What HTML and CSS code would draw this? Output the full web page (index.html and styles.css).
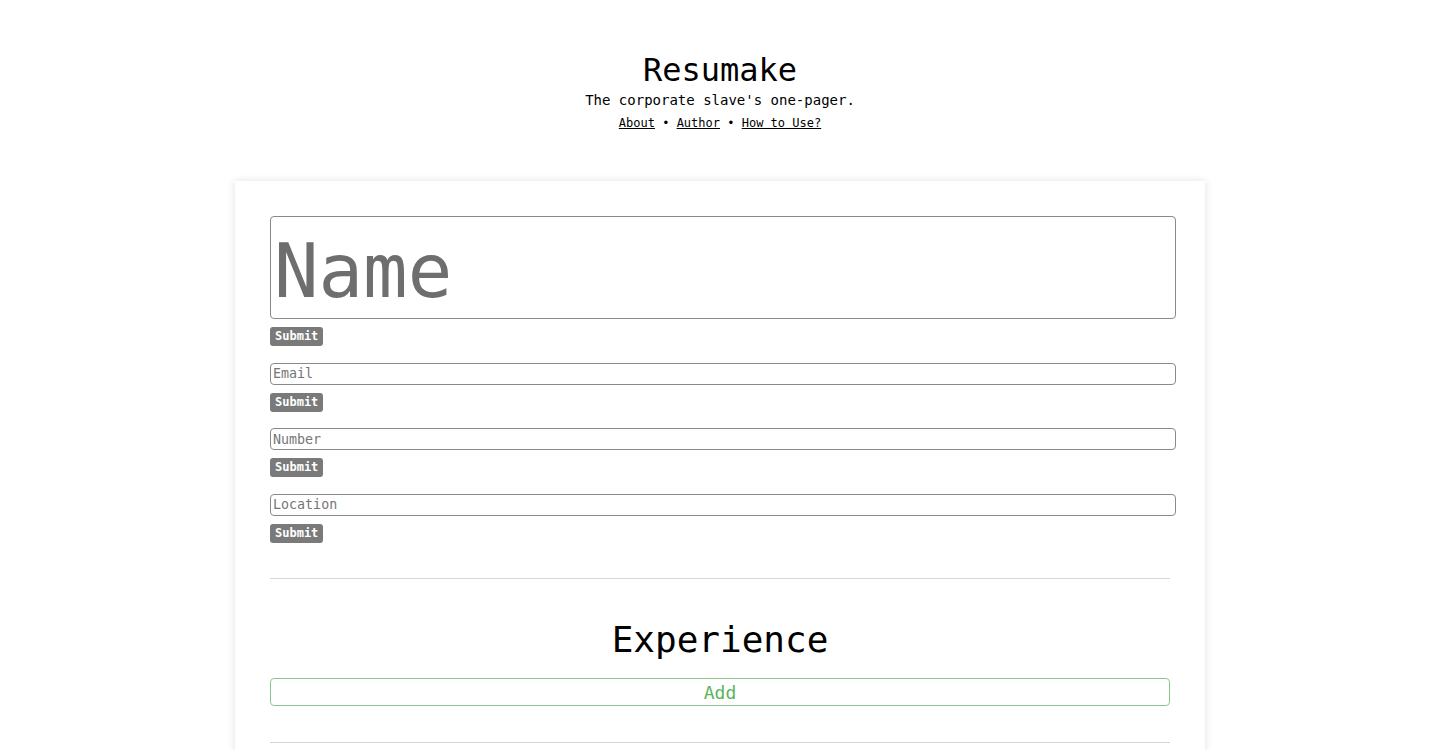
FILE: index.html
```html
<!DOCTYPE html>
<html lang="en">
<head>
<meta charset="utf-8">
<title>Resumake</title>
<link rel="stylesheet" href="styles.css">
</head>
<body>
  <header class="masthead">
    <h1 class="title">Resumake</h1>
    <p class="tagline">The corporate slave's one-pager.</p>
    <nav class="links">
      <a href="#">About</a> • <a href="#">Author</a> • <a href="#">How to Use?</a>
    </nav>
  </header>

  <main class="card">
    <form class="field field-name">
      <input class="input input-name" type="text" placeholder="Name">
      <button class="submit" type="button">Submit</button>
    </form>
    <form class="field">
      <input class="input" type="text" placeholder="Email">
      <button class="submit" type="button">Submit</button>
    </form>
    <form class="field">
      <input class="input" type="text" placeholder="Number">
      <button class="submit" type="button">Submit</button>
    </form>
    <form class="field">
      <input class="input" type="text" placeholder="Location">
      <button class="submit" type="button">Submit</button>
    </form>

    <hr class="rule rule-top">

    <section class="section">
      <h2 class="section-title">Experience</h2>
      <button class="add" type="button">Add</button>
    </section>

    <hr class="rule">
  </main>
</body>
</html>
```

FILE: styles.css
```css
* { box-sizing: border-box; }

html, body {
  margin: 0;
  padding: 0;
  background: #ffffff;
}

body {
  font-family: "DejaVu Sans Mono", "Liberation Mono", monospace;
  color: #000;
}

.masthead {
  text-align: center;
  padding-top: 50px;
}

.title {
  margin: 0;
  font-size: 32px;
  line-height: 40px;
  font-weight: 400;
}

.tagline {
  margin: 1px 0 0;
  font-size: 14px;
  line-height: 18px;
}

.links {
  margin-top: 6px;
  font-size: 12px;
  line-height: 16px;
}

.links a {
  color: #000;
  text-decoration: underline;
}

.card {
  width: 970px;
  margin: 50px auto 0;
  padding: 35px 35px 10px;
  background: #fff;
  box-shadow: 0 0 8px rgba(0, 0, 0, 0.12);
}

.field {
  display: flex;
  flex-direction: column;
  align-items: flex-start;
  gap: 8px;
  margin: 0 0 16.5px;
}

.input {
  width: 906px;
  height: 22px;
  padding: 1px 2px;
  border: 1px solid #8a8a8a;
  border-radius: 4px;
  font-family: "DejaVu Sans Mono", "Liberation Mono", monospace;
  font-size: 13.33px;
  color: #000;
  background: #fff;
  outline: none;
}

.input::placeholder { color: #767676; }

.input-name {
  height: 103px;
  font-size: 74px;
  padding: 6px 3px 0;
}

.input-name::placeholder { color: #6e6e6e; }

.submit {
  height: 19px;
  padding: 0 5px;
  border: none;
  border-radius: 3px;
  background: #7a7a7a;
  color: #fff;
  font-family: "DejaVu Sans Mono", "Liberation Mono", monospace;
  font-size: 12px;
  font-weight: 700;
  line-height: 19px;
}

.rule {
  margin: 20px 0 0;
  border: 0;
  border-top: 1px solid #d6d6d6;
  width: 900px;
}

.rule-top { margin-top: 35px; }

.section {
  display: flex;
  flex-direction: column;
  align-items: center;
}

.section-title {
  margin: 39px 0 0;
  font-size: 36px;
  line-height: 44px;
  font-weight: 400;
}

.add {
  margin-top: 16px;
  width: 900px;
  height: 28px;
  border: 1px solid #8cc68c;
  border-radius: 4px;
  background: #fff;
  color: #5cb35c;
  font-family: "DejaVu Sans Mono", "Liberation Mono", monospace;
  font-size: 18px;
  line-height: 26px;
  margin-bottom: 16px;
}
```
